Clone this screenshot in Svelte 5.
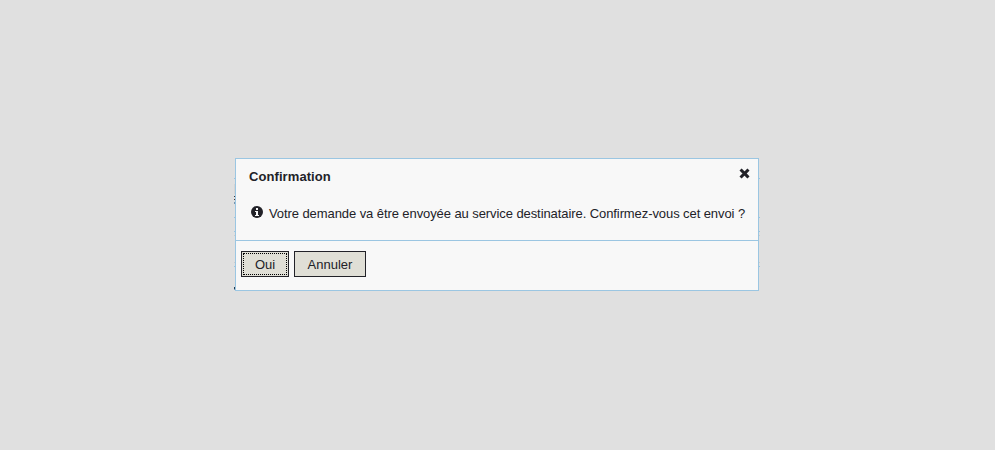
<script>
  const blue = '#9cc5df';
  const gray = '#cccccc';
  const traces = [
    { x: -2, y: 19, h: 1, c: blue },
    { x: -2, y: 25, h: 10, c: '#d4d4d4' },
    { x: -2, y: 37, h: 1, c: '#343438' },
    { x: -2, y: 40, h: 1, c: '#49352f' },
    { x: -2, y: 43, h: 2, c: '#7896af' },
    { x: -2, y: 58, h: 1, c: blue },
    { x: -2, y: 72, h: 1, c: blue },
    { x: -2, y: 76, h: 1, c: gray },
    { x: -2, y: 103, h: 1, c: gray },
    { x: -2, y: 107, h: 1, c: blue },
    { x: -2, y: 128, h: 2, c: '#203a50' },
    { x: -2, y: 130, h: 1, c: '#7894aa' },
    { x: 523, y: 19, h: 1, c: blue },
    { x: 523, y: 58, h: 1, c: blue },
    { x: 523, y: 72, h: 1, c: blue },
    { x: 523, y: 76, h: 1, c: gray },
    { x: 523, y: 103, h: 1, c: gray },
    { x: 523, y: 107, h: 1, c: blue }
  ];
</script>

<main class="overlay">
  <div class="dialog" role="dialog" aria-labelledby="title">
    <header>
      <h1 id="title">Confirmation</h1>
      <button class="close" aria-label="Fermer">
        <svg width="11" height="11" viewBox="0 0 11 11">
          <path d="M2.6 2.6 8.4 8.4M8.4 2.6 2.6 8.4" stroke="#222228" stroke-width="3" stroke-linecap="square" stroke-linejoin="round" />
        </svg>
      </button>
    </header>
    <div class="message">
      <svg width="12" height="12" viewBox="0 0 12 12">
        <circle cx="6" cy="6" r="6" fill="#222228" />
        <path d="M5 2h2v2H5zM4 5h3v4h1v1H4V9h1V6H4z" fill="#f8f8f8" />
      </svg>
      <p>Votre demande va être envoyée au service destinataire. Confirmez-vous cet envoi ?</p>
    </div>
    <footer>
      <button class="action yes"><span>Oui</span></button>
      <button class="action cancel"><span>Annuler</span></button>
    </footer>
    {#each traces as t}
      <i class="trace" style="left:{t.x}px;top:{t.y}px;height:{t.h}px;background:{t.c}"></i>
    {/each}
  </div>
</main>

<style>
  :global(body) {
    background: #e0e0e0;
  }
  .overlay {
    box-sizing: border-box;
    width: 995px;
    height: 450px;
    padding: 158px 0 0 235px;
    background: #e0e0e0;
    font: 13px/16px "Liberation Sans", Arial, sans-serif;
    color: #222228;
    overflow: hidden;
  }
  .dialog {
    position: relative;
    box-sizing: border-box;
    width: 524px;
    height: 133px;
    border: 1px solid #9bc6e2;
    background: #f8f8f8;
    display: flex;
    flex-direction: column;
  }
  header {
    display: flex;
    justify-content: space-between;
    height: 41px;
    padding: 9px 8px 0 13px;
    box-sizing: border-box;
  }
  h1 {
    margin: 1px 0 0;
    font-size: 13px;
    line-height: 16px;
    font-weight: bold;
    letter-spacing: 0.08px;
    white-space: nowrap;
  }
  .close {
    width: 11px;
    height: 11px;
    padding: 0;
    border: 0;
    background: none;
  }
  svg {
    display: block;
    flex: none;
  }
  .message {
    display: flex;
    height: 40px;
    padding: 6px 0 0 15px;
    box-sizing: border-box;
  }
  p {
    margin: 0 0 0 6px;
    letter-spacing: -0.082px;
    white-space: nowrap;
  }
  footer {
    display: flex;
    flex: 1;
    gap: 5px;
    padding: 10px 0 0 5px;
    border-top: 1px solid #9bc6e2;
    align-items: flex-start;
  }
  .action {
    box-sizing: border-box;
    height: 26px;
    padding: 1px;
    border: 1px solid #222228;
    border-radius: 0;
    background: #e0dfd6;
    font: inherit;
    color: inherit;
  }
  .action span {
    box-sizing: border-box;
    display: flex;
    align-items: center;
    justify-content: center;
    height: 22px;
    padding-top: 2px;
    border: 1px dotted transparent;
  }
  .yes {
    width: 48px;
  }
  .yes span {
    border-color: #000;
  }
  .cancel {
    width: 72px;
  }
  .trace {
    position: absolute;
    width: 1px;
  }
</style>
